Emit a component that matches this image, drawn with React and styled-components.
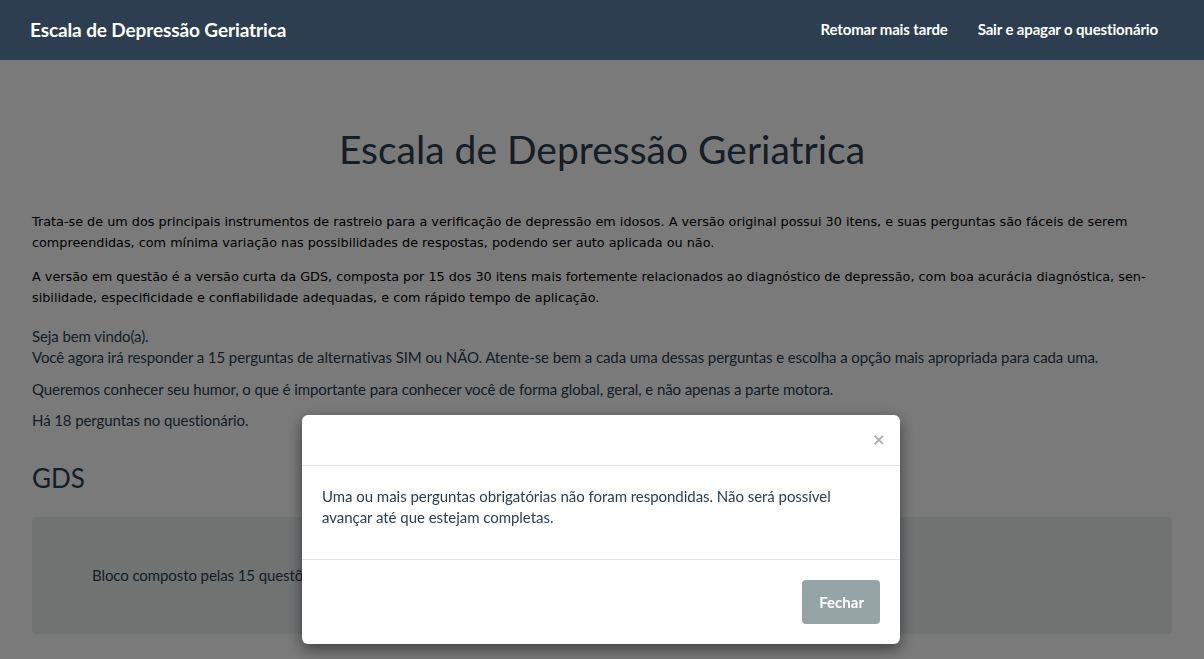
import React from "react";
import styled, { createGlobalStyle } from "styled-components";

const GlobalStyle = createGlobalStyle`
  html, body { margin: 0; padding: 0; }
  body {
    background: #ffffff;
    font-family: Lato, "Noto Sans", Arial, sans-serif;
    font-size: 15px;
    line-height: 1.42857;
    color: #2c3e50;
    overflow: hidden;
  }
  * { box-sizing: border-box; }
`;

const Navbar = styled.nav`
  position: relative;
  z-index: 1050;
  height: 60px;
  background: #2c3e50;
  display: flex;
  align-items: center;
  justify-content: space-between;
  padding: 0 31px 0 15px;
`;

const Brand = styled.a`
  padding: 0 15px;
  color: #ffffff;
  font-size: 19px;
  font-weight: 700;
  letter-spacing: -0.11px;
  text-decoration: none;
`;

const NavLinks = styled.div`
  display: flex;
`;

const NavLink = styled.a`
  padding: 0 15px;
  color: #ffffff;
  font-size: 15px;
  font-weight: 700;
  letter-spacing: -0.14px;
  text-decoration: none;
`;

const Main = styled.main`
  padding: 68px 32px 0;
`;

const Title = styled.h1`
  margin: 0 0 40px;
  font-size: 39px;
  font-weight: 400;
  line-height: 43px;
  text-align: center;
  color: #2c3e50;
`;

const Intro = styled.p`
  margin: 0 0 13px;
  font-family: "DejaVu Sans", Verdana, sans-serif;
  font-size: 12.8px;
  line-height: 21px;
  color: #000000;
`;

const Welcome = styled.div`
  margin-top: 18px;
`;

const Text = styled.p`
  margin: 0 0 10px;
  font-size: 15px;
  line-height: 1.42857;
  letter-spacing: -0.09px;
`;

const Line = styled.span`
  display: block;
`;

const Section = styled.h2`
  margin: 31px 0 24px;
  font-size: 26px;
  font-weight: 400;
  line-height: 30px;
`;

const Well = styled.div`
  background: #ecf0f1;
  border-radius: 4px;
  padding: 48px 60px;
  min-height: 116px;
`;

const WellText = styled.p`
  margin: 0;
  font-size: 15px;
  line-height: 1.42857;
  letter-spacing: -0.09px;
`;

const Backdrop = styled.div`
  position: fixed;
  inset: 0;
  background: rgba(0, 0, 0, 0.52);
  z-index: 1040;
`;

const Modal = styled.div`
  position: fixed;
  top: 415px;
  left: 302px;
  width: 598px;
  background: #ffffff;
  border-radius: 6px;
  box-shadow: 0 5px 15px rgba(0, 0, 0, 0.5);
  z-index: 1060;
`;

const ModalHeader = styled.div`
  display: flex;
  justify-content: flex-end;
  align-items: center;
  height: 51px;
  padding: 0 15px;
  border-bottom: 1px solid #e5e5e5;
`;

const Close = styled.button`
  border: 0;
  background: none;
  padding: 0;
  margin-top: -4px;
  font-family: Lato, Arial, sans-serif;
  font-size: 21px;
  font-weight: 700;
  line-height: 1;
  color: #000;
  opacity: 0.3;
  cursor: pointer;
`;

const ModalBody = styled.div`
  padding: 20px;
  border-bottom: 1px solid #e5e5e5;
`;

const ModalText = styled.p`
  margin: 0 0 10px;
  font-size: 15px;
  line-height: 1.42857;
  letter-spacing: -0.04px;
  color: #2c3e50;
`;

const ModalFooter = styled.div`
  display: flex;
  justify-content: flex-end;
  padding: 20px;
`;

const Button = styled.button`
  height: 44px;
  padding: 0 16px 0 17px;
  border: 0;
  border-radius: 4px;
  background: #95a5a6;
  color: #ffffff;
  font-family: Lato, Arial, sans-serif;
  font-size: 15px;
  font-weight: 700;
  cursor: pointer;
`;

export default function App() {
  return (
    <>
      <GlobalStyle />
      <Navbar>
        <Brand href="#">Escala de Depressão Geriatrica</Brand>
        <NavLinks>
          <NavLink href="#">Retomar mais tarde</NavLink>
          <NavLink href="#">Sair e apagar o questionário</NavLink>
        </NavLinks>
      </Navbar>
      <Main>
        <Title>Escala de Depressão Geriatrica</Title>
        <Intro>
          Trata-se de um dos principais instrumentos de rastreio para a verificação de depressão em idosos. A versão original possui 30 itens, e suas perguntas são fáceis de serem compreendidas, com mínima variação nas possibilidades de respostas, podendo ser auto aplicada ou não.
        </Intro>
        <Intro>
          A versão em questão é a versão curta da GDS, composta por 15 dos 30 itens mais fortemente relacionados ao diagnóstico de depressão, com boa acurácia diagnóstica, sen&shy;sibilidade, especificidade e confiabilidade adequadas, e com rápido tempo de aplicação.
        </Intro>
        <Welcome>
          <Text>
            <Line>Seja bem vindo(a).</Line>
            <Line>Você agora irá responder a 15 perguntas de alternativas SIM ou NÃO. Atente-se bem a cada uma dessas perguntas e escolha a opção mais apropriada para cada uma.</Line>
          </Text>
          <Text>Queremos conhecer seu humor, o que é importante para conhecer você de forma global, geral, e não apenas a parte motora.</Text>
          <Text>Há 18 perguntas no questionário.</Text>
        </Welcome>
        <Section>GDS</Section>
        <Well>
          <WellText>Bloco composto pelas 15 questões da Escala de Depressão Geriátrica.</WellText>
        </Well>
      </Main>
      <Backdrop />
      <Modal role="dialog">
        <ModalHeader>
          <Close aria-label="Fechar">×</Close>
        </ModalHeader>
        <ModalBody>
          <ModalText>
            Uma ou mais perguntas obrigatórias não foram respondidas. Não será possível avançar até que estejam completas.
          </ModalText>
        </ModalBody>
        <ModalFooter>
          <Button>Fechar</Button>
        </ModalFooter>
      </Modal>
    </>
  );
}
